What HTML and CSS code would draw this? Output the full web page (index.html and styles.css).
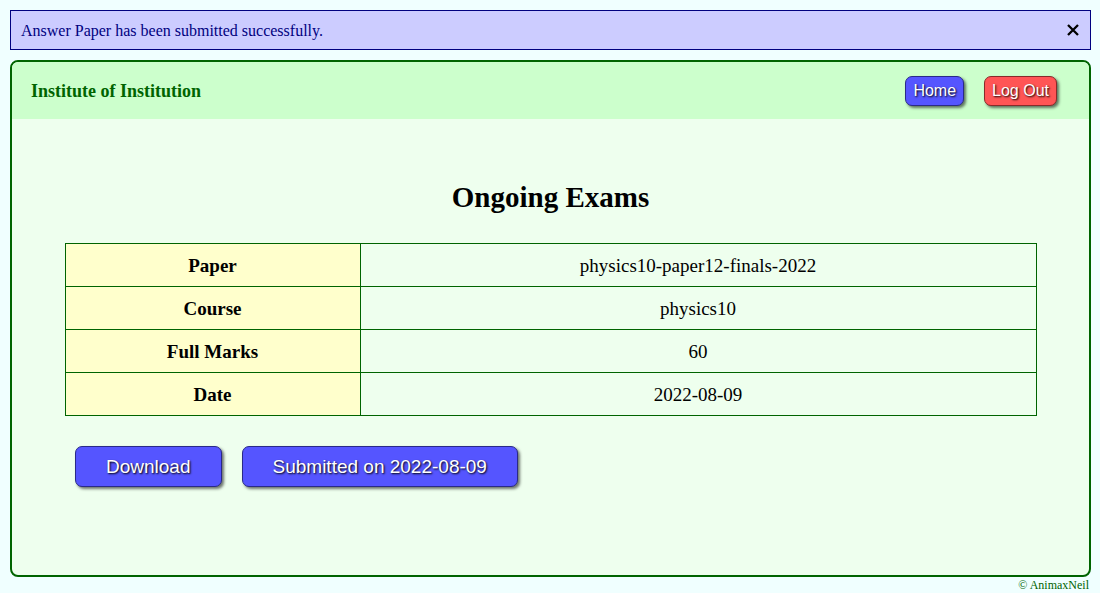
FILE: index.html
```html
<!DOCTYPE html>
<html>
<head>
<meta charset="utf-8">
<link rel="stylesheet" href="styles.css">
</head>
<body>
<div class="alert">
  <span class="msg">Answer Paper has been submitted successfully.</span>
  <svg class="close" width="14" height="14" viewBox="0 0 14 14"><path d="M2 2 L12 12 M12 2 L2 12" stroke="#000" stroke-width="2.3" stroke-linecap="butt"/></svg>
</div>
<div class="main">
  <div class="header">
    <div class="brand">Institute of Institution</div>
    <div class="nav">
      <button class="btn small blue">Home</button>
      <button class="btn small red">Log Out</button>
    </div>
  </div>
  <div class="content">
    <h2 class="title">Ongoing Exams</h2>
    <table class="info">
      <tr><th>Paper</th><td>physics10-paper12-finals-2022</td></tr>
      <tr><th>Course</th><td>physics10</td></tr>
      <tr><th>Full Marks</th><td>60</td></tr>
      <tr><th>Date</th><td>2022-08-09</td></tr>
    </table>
    <div class="actions">
      <button class="btn big blue">Download</button>
      <button class="btn big blue">Submitted on 2022-08-09</button>
    </div>
  </div>
</div>
<div class="footer">© AnimaxNeil</div>
</body>
</html>
```
FILE: styles.css
```css
html, body {
  margin: 0;
  padding: 0;
  background: #f0ffff;
  font-family: "Liberation Serif", "Times New Roman", serif;
}
body {
  padding: 10px 9px 0 10px;
}
.alert {
  display: flex;
  justify-content: space-between;
  align-items: center;
  height: 38px;
  padding: 0 10px;
  background: #ccccff;
  border: 1px solid #000080;
  color: #000080;
  font-size: 16px;
}
.msg {
  padding-top: 2px;
}
.close {
  display: block;
  margin-right: 0;
}
.main {
  margin-top: 10px;
  border: 2px solid #006400;
  border-radius: 8px;
  background: #eeffee;
  overflow: hidden;
  height: 513px;
}
.header {
  display: flex;
  justify-content: space-between;
  align-items: center;
  height: 57px;
  background: #ccffcc;
  padding: 0 32px 0 19px;
}
.brand {
  color: #006400;
  font-weight: bold;
  font-size: 18px;
  padding-top: 2px;
}
.nav {
  display: flex;
  gap: 20px;
}
.btn {
  font-family: "Liberation Sans", Arial, sans-serif;
  color: #fff;
  border: 1px solid #333;
  border-radius: 7px;
  box-shadow: 2px 2px 3px rgba(0,0,0,0.55);
  text-shadow: 1px 1px 2px #000;
  cursor: pointer;
}
.btn.small {
  font-size: 16px;
  height: 30px;
  padding: 0 7px;
}
.btn.big {
  font-size: 19px;
  height: 41px;
  padding: 0 30px;
}
.blue {
  background: #5555ff;
  border-color: #2a2a88;
}
.red {
  background: #ff5555;
  border-color: #882a2a;
}
.content {
  padding-top: 60px;
}
.title {
  margin: 0 0 28px;
  text-align: center;
  font-size: 29px;
  font-weight: bold;
  line-height: 36px;
}
.info {
  width: 972px;
  margin: 0 auto;
  border-collapse: collapse;
  font-size: 19px;
}
.info th, .info td {
  border: 1px solid #006400;
  height: 43px;
  box-sizing: border-box;
  padding: 2px 0 0;
  text-align: center;
}
.info th {
  width: 295px;
  background: #ffffcc;
}
.actions {
  display: flex;
  gap: 20px;
  padding: 30px 0 0 63px;
}
.footer {
  text-align: right;
  font-size: 12px;
  color: #006400;
  padding-right: 2px;
  margin-top: 1px;
}
```
